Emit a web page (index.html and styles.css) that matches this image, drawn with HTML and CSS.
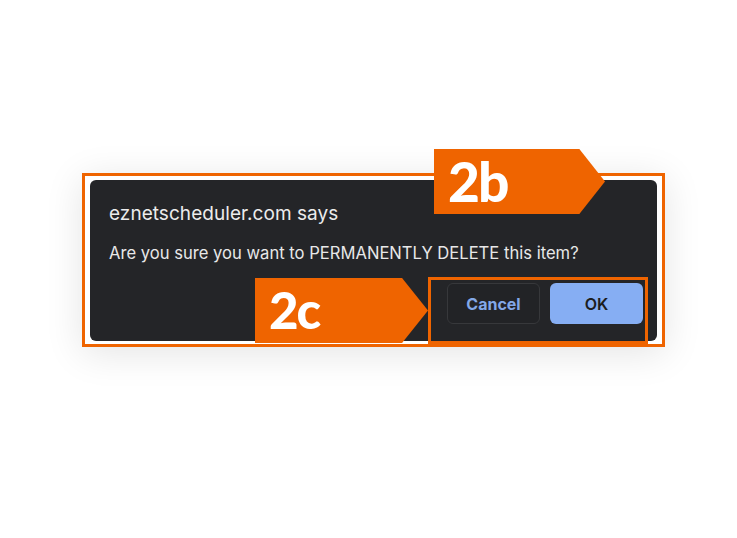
FILE: index.html
```html
<!DOCTYPE html>
<html lang="en">
<head>
<meta charset="utf-8">
<title>Confirm dialog</title>
<link rel="stylesheet" href="styles.css">
</head>
<body>
<div class="stage">
  <div class="frame">
    <div class="dialog">
      <div class="title">eznetscheduler.com says</div>
      <div class="message">Are you sure you want to PERMANENTLY DELETE this item?</div>
      <div class="actions">
        <button class="btn btn-cancel">Cancel</button>
        <button class="btn btn-ok">OK</button>
      </div>
    </div>
    <div class="focus-box"></div>
    <div class="tag tag-2b">2b</div>
    <div class="tag tag-2c">2c</div>
  </div>
</div>
</body>
</html>
```

FILE: styles.css
```css
html, body {
  margin: 0;
  padding: 0;
  background: #ffffff;
}
body {
  width: 737px;
  height: 538px;
  overflow: hidden;
}
.stage {
  padding: 173px 0 0 82px;
}
.frame {
  position: relative;
  width: 583px;
  box-sizing: border-box;
  border: 3px solid #ef6400;
  padding: 4px 5px 3px 5px;
  background: #ffffff;
  box-shadow: 0 6px 36px rgba(0, 0, 0, 0.11);
}
.dialog {
  height: 161px;
  box-sizing: border-box;
  background: #242528;
  border-radius: 6px;
  padding: 22px 14px 0 19px;
  display: flex;
  flex-direction: column;
  font-family: Inter, "Liberation Sans", sans-serif;
}
.title {
  font-size: 19px;
  line-height: 24px;
  color: #ececec;
  letter-spacing: 0.05px;
}
.message {
  margin-top: 17px;
  font-size: 16.6px;
  line-height: 20px;
  color: #e8e8e8;
}
.actions {
  margin-top: 20px;
  display: flex;
  justify-content: flex-end;
  gap: 10px;
}
.btn {
  width: 93px;
  height: 41px;
  box-sizing: border-box;
  border-radius: 6px;
  font-family: Inter, "Liberation Sans", sans-serif;
  font-size: 16px;
  font-weight: 700;
  cursor: pointer;
}
.btn-cancel {
  background: #222326;
  border: 1px solid #37383b;
  color: #83a8e8;
}
.btn-ok {
  background: #86aef3;
  border: none;
  color: #1c1d20;
  font-weight: 600;
}
.focus-box {
  position: absolute;
  left: 343px;
  top: 101px;
  width: 220px;
  height: 67px;
  box-sizing: border-box;
  border: 3px solid #ef6400;
}
.tag {
  position: absolute;
  height: 65px;
  box-sizing: border-box;
  background: #ef6400;
  color: #ffffff;
  font-family: Lato, "Open Sans", sans-serif;
  font-weight: 900;
  letter-spacing: -2px;
  clip-path: polygon(0 0, 85% 0, 100% 50%, 85% 100%, 0 100%);
}
.tag-2b {
  left: 349px;
  top: -27px;
  width: 171px;
  padding-left: 14px;
  font-size: 55px;
  line-height: 64px;
}
.tag-2c {
  left: 170px;
  top: 102px;
  width: 173px;
  padding-left: 14px;
  font-size: 51px;
  line-height: 64px;
}
```
